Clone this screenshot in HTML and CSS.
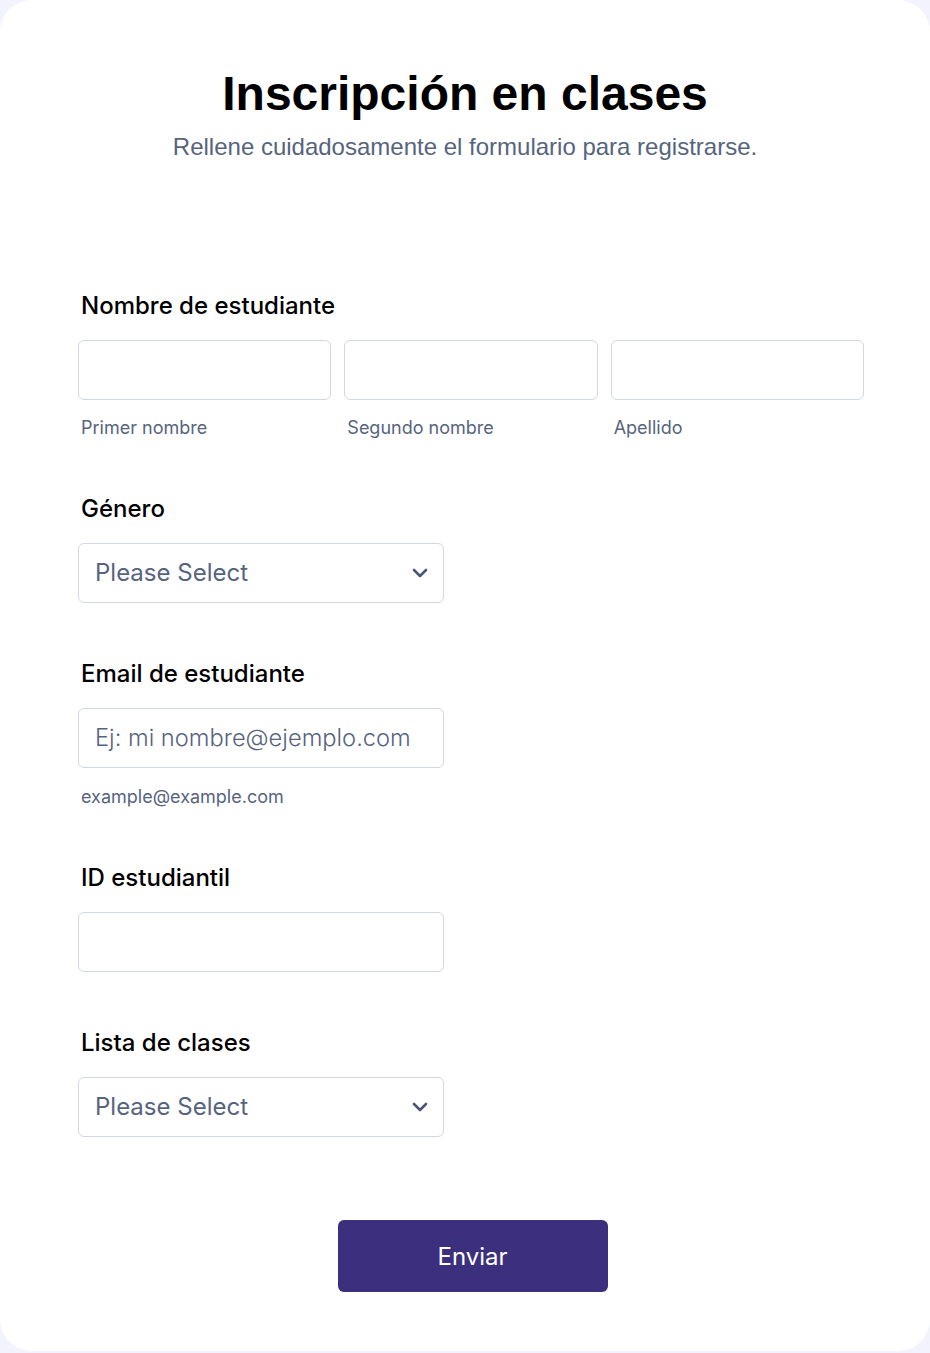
FILE: index.html
```html
<!DOCTYPE html>
<html lang="es">
<head>
<meta charset="utf-8">
<title>Inscripción en clases</title>
<link rel="stylesheet" href="styles.css">
</head>
<body>
<main class="card">
  <header class="head">
    <h1 class="title">Inscripción en clases</h1>
    <p class="subtitle">Rellene cuidadosamente el formulario para registrarse.</p>
  </header>

  <form class="form">
    <div class="field">
      <label class="label">Nombre de estudiante</label>
      <div class="name-row">
        <div class="name-col">
          <input class="input" type="text">
          <span class="sublabel">Primer nombre</span>
        </div>
        <div class="name-col">
          <input class="input" type="text">
          <span class="sublabel">Segundo nombre</span>
        </div>
        <div class="name-col">
          <input class="input" type="text">
          <span class="sublabel">Apellido</span>
        </div>
      </div>
    </div>

    <div class="field">
      <label class="label">Género</label>
      <div class="select half">
        <span class="select-text">Please Select</span>
        <svg class="chev" width="16" height="10" viewBox="0 0 16 10"><path d="M2 2 L8 8 L14 2" fill="none" stroke="#4b5578" stroke-width="2.6" stroke-linecap="round" stroke-linejoin="round"/></svg>
      </div>
    </div>

    <div class="field">
      <label class="label">Email de estudiante</label>
      <div class="input half with-text"><span class="placeholder">Ej: mi nombre@ejemplo.com</span></div>
      <span class="sublabel sub-email">example@example.com</span>
    </div>

    <div class="field">
      <label class="label">ID estudiantil</label>
      <div class="input half"></div>
    </div>

    <div class="field">
      <label class="label">Lista de clases</label>
      <div class="select half">
        <span class="select-text">Please Select</span>
        <svg class="chev" width="16" height="10" viewBox="0 0 16 10"><path d="M2 2 L8 8 L14 2" fill="none" stroke="#4b5578" stroke-width="2.6" stroke-linecap="round" stroke-linejoin="round"/></svg>
      </div>
    </div>

    <div class="actions">
      <button class="submit" type="button">Enviar</button>
    </div>
  </form>
</main>
</body>
</html>
```

FILE: styles.css
```css
html, body {
  margin: 0;
  padding: 0;
}
body {
  background: #f3f3fe;
  font-family: Inter, "Noto Sans", sans-serif;
}
.card {
  background: #ffffff;
  border-radius: 32px;
  width: 930px;
  height: 1351px;
  box-sizing: border-box;
  padding: 0 66px 0 78px;
}
.head {
  text-align: center;
  padding-top: 66px;
  margin-left: -12px;
}
.title {
  margin: 0;
  font-family: "Liberation Sans", Arial, sans-serif;
  font-weight: 700;
  font-size: 48px;
  line-height: 56px;
  color: #000;
}
.subtitle {
  margin: 10px 0 0;
  font-family: "Liberation Sans", Arial, sans-serif;
  font-size: 24px;
  line-height: 30px;
  color: #57647e;
}
.form {
  padding-top: 130px;
}
.field {
  display: flex;
  flex-direction: column;
  align-items: flex-start;
  margin-bottom: 57px;
}
.label {
  display: block;
  font-size: 24px;
  font-weight: 500;
  line-height: 28px;
  color: #000;
  margin-left: 3px;
  margin-bottom: 20px;
}
.name-row {
  display: flex;
  gap: 13px;
  width: 786px;
}
.name-col {
  flex: 1;
  display: flex;
  flex-direction: column;
}
.input {
  box-sizing: border-box;
  height: 60px;
  width: 100%;
  border: 1.5px solid #d3d6e5;
  border-radius: 6px;
  background: #fff;
  padding: 0 16px;
  font-family: Inter, sans-serif;
  font-size: 24px;
  outline: none;
}
.half {
  width: 366px;
}
.with-text, .select {
  display: flex;
  align-items: center;
}
.select {
  box-sizing: border-box;
  height: 60px;
  border: 1.5px solid #d3d6e5;
  border-radius: 6px;
  background: #fff;
  padding: 0 15px 0 16px;
  justify-content: space-between;
}
.select-text, .placeholder {
  font-size: 24px;
  color: #57647e;
  line-height: 30px;
}
.placeholder {
  font-weight: 300;
  font-size: 23.7px;
}
.sublabel {
  display: block;
  font-size: 18px;
  line-height: 20px;
  color: #57647e;
  margin-top: 18px;
  margin-left: 3px;
}
.sub-email {
  margin-top: 19px;
}
.actions {
  display: flex;
  justify-content: center;
  margin-left: 3px;
  padding-top: 26px;
}
.submit {
  width: 270px;
  height: 72px;
  border: none;
  border-radius: 6px;
  background: #3c307e;
  color: #fff;
  font-family: Inter, sans-serif;
  font-size: 24px;
  cursor: pointer;
}
```
